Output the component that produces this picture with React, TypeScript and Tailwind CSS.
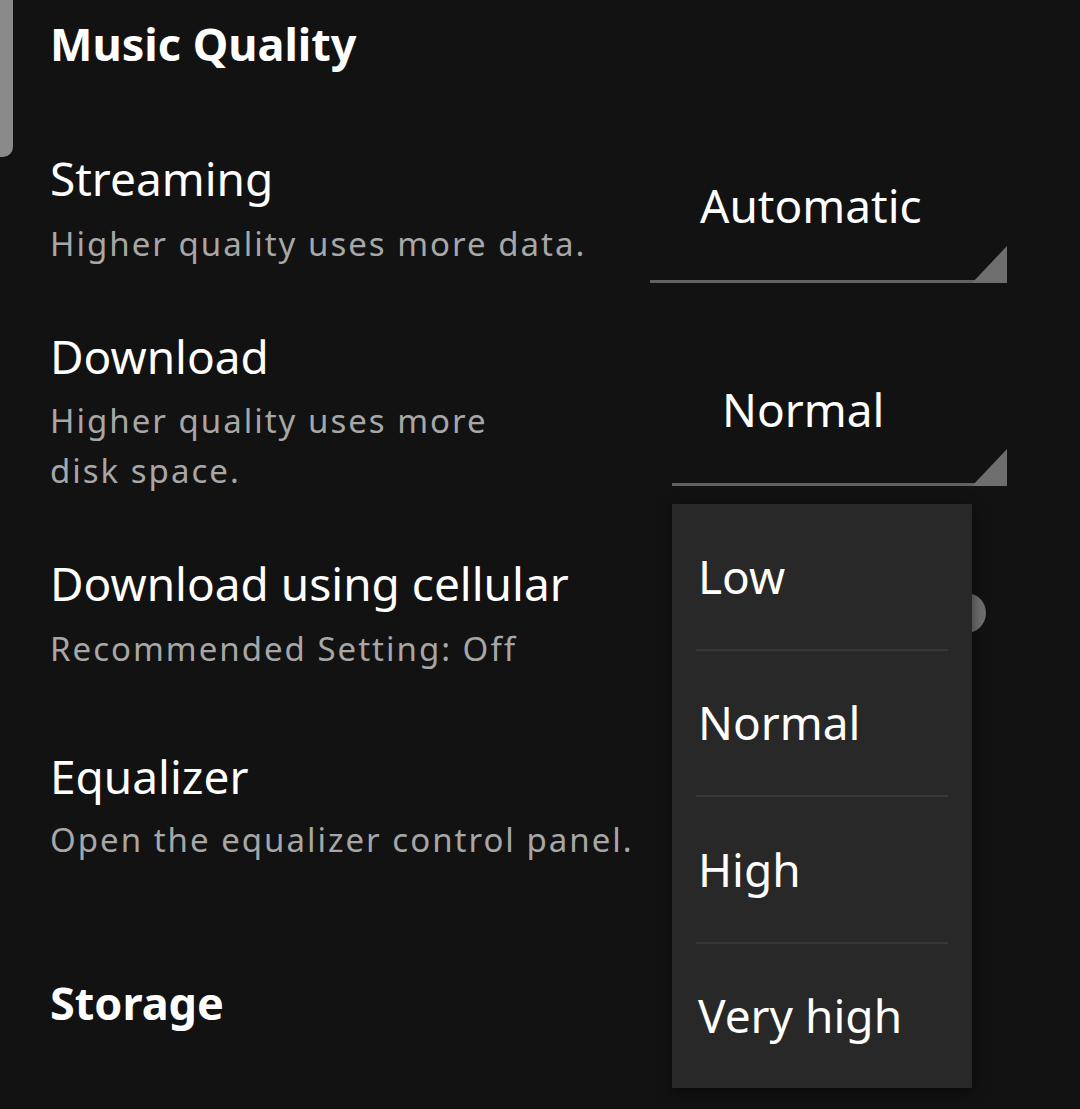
import React from 'react';

const menuOptions = ['Low', 'Normal', 'High', 'Very high'];

function Triangle() {
  return (
    <svg className="absolute right-0 bottom-0" width="35" height="37" viewBox="0 0 35 37">
      <polygon points="0,37 35,0 35,37" fill="#6e6e6e" />
    </svg>
  );
}

function Dropdown({ value, width, height, padTop }: { value: string; width: string; height: string; padTop: string }) {
  return (
    <div className={`relative ${width} ${height} shrink-0`}>
      <div className={`${padTop} pl-[50px] text-[46px] leading-[52px] text-white`}>{value}</div>
      <div className="absolute left-0 right-0 bottom-0 h-[3px] bg-[#626262]" />
      <Triangle />
    </div>
  );
}

export default function App() {
  return (
    <div className="relative w-[1080px] h-[1109px] overflow-hidden bg-[#121212] [font-family:'Noto_Sans',sans-serif] text-white">
      {/* scrollbar */}
      <div className="absolute left-0 top-0 w-[13px] h-[157px] rounded-br-[10px] bg-[#8a8a8a]" />

      <div className="pl-[50px] pr-[73px]">
        <h1 className="pt-[16px] text-[45px] leading-[56px] font-bold">Music Quality</h1>

        {/* Streaming */}
        <div className="mt-[80px] flex items-start justify-between">
          <div>
            <div className="text-[46px] leading-[52px]">Streaming</div>
            <div className="mt-[15px] text-[33px] leading-[50px] tracking-[2px] text-[#a7a7a7]">Higher quality uses more data.</div>
          </div>
          <Dropdown value="Automatic" width="w-[357px]" height="h-[131px]" padTop="pt-[27px]" />
        </div>

        {/* Download */}
        <div className="mt-[47px] flex items-start justify-between">
          <div>
            <div className="text-[46px] leading-[52px]">Download</div>
            <div className="mt-[14px] max-w-[470px] text-[33px] leading-[50px] tracking-[2px] text-[#a7a7a7]">
              Higher quality uses more disk space.
            </div>
          </div>
          <Dropdown value="Normal" width="w-[335px]" height="h-[156px]" padTop="pt-[53px]" />
        </div>

        {/* Download using cellular */}
        <div className="mt-[61px] flex items-start justify-between">
          <div>
            <div className="text-[46px] leading-[52px]">Download using cellular</div>
            <div className="mt-[15px] text-[33px] leading-[50px] tracking-[2px] text-[#a7a7a7]">Recommended Setting: Off</div>
          </div>
          <div className="relative mt-[36px] mr-[21px] flex h-[40px] w-[80px] items-center justify-end">
            <div className="absolute left-0 right-[6px] h-[28px] rounded-full bg-[#3a3a3a]" />
            <div className="relative h-[40px] w-[40px] rounded-full bg-[#6e6e6e]" />
          </div>
        </div>

        {/* Equalizer */}
        <div className="mt-[76px]">
          <div className="text-[46px] leading-[52px]">Equalizer</div>
          <div className="mt-[13px] text-[33px] leading-[50px] tracking-[2px] text-[#a7a7a7]">Open the equalizer control panel.</div>
        </div>

        <h2 className="mt-[112px] text-[45px] leading-[52px] font-bold">Storage</h2>
      </div>

      {/* open dropdown menu */}
      <div className="absolute left-[672px] top-[504px] flex h-[584px] w-[300px] flex-col bg-[#282828] shadow-[0_4px_12px_rgba(0,0,0,0.5)]">
        {menuOptions.map((opt, i) => (
          <React.Fragment key={opt}>
            {i > 0 && <div className="mx-[24px] h-[2px] bg-[#373737]" />}
            <div className="flex flex-1 items-center pl-[26px] text-[46px] text-white">{opt}</div>
          </React.Fragment>
        ))}
      </div>
    </div>
  );
}
